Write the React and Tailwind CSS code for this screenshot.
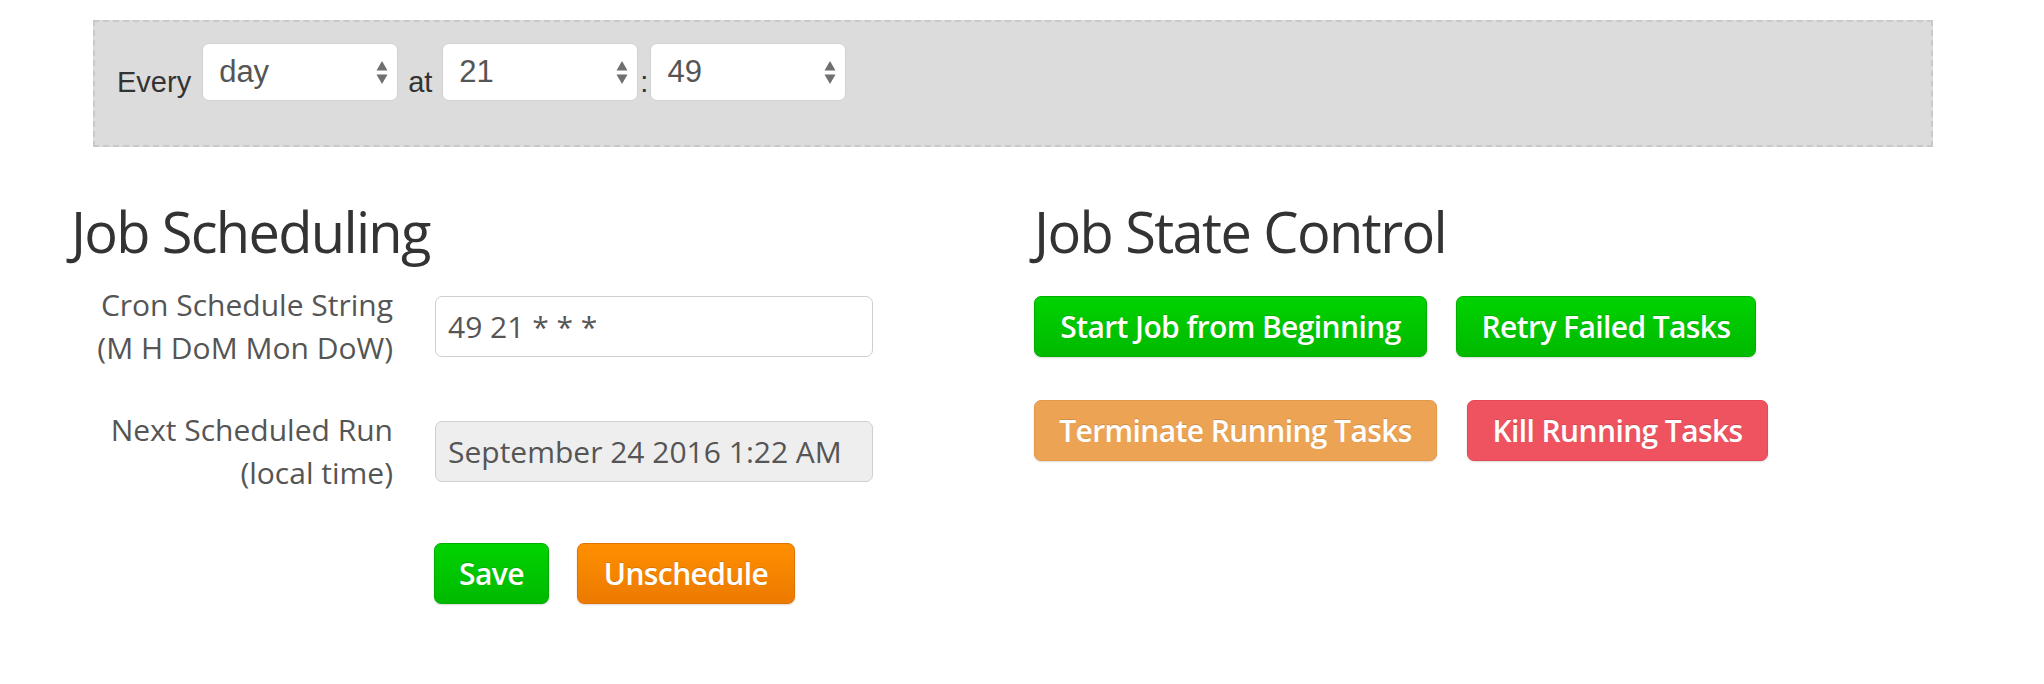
import React from 'react'

const sans = 'font-["Open_Sans",sans-serif]'
const helv = 'font-["Liberation_Sans",Arial,sans-serif]'

function Arrows() {
  return (
    <svg width="12" height="25" viewBox="0 0 12 25" className="shrink-0">
      <path d="M6 1 L11.5 10.5 L0.5 10.5 Z" fill="#707070" />
      <path d="M6 24 L11.5 14.5 L0.5 14.5 Z" fill="#707070" />
    </svg>
  )
}

function Select({ value }) {
  return (
    <div className="w-[196px] h-[58px] bg-white rounded-[7px] border border-[#d2d2d2] flex items-center justify-between pl-[16px] pr-[9px]">
      <span className="text-[31px] leading-[56px] text-[#555] -mt-[1px]">{value}</span>
      <Arrows />
    </div>
  )
}

const green = 'bg-gradient-to-b from-[#00d300] to-[#00b900] border border-[#00ae00]'

function Btn({ children, className }) {
  return (
    <button
      className={`h-[61px] rounded-[7px] px-[23px] text-white text-[30px] font-semibold tracking-[-0.6px] [text-shadow:0_-1px_0_rgba(0,0,0,0.15)] shadow-[0_1px_2px_rgba(0,0,0,0.15)] ${sans} ${className}`}
    >
      {children}
    </button>
  )
}

function FormRow({ lines, value, disabled }) {
  return (
    <div className="flex items-center">
      <div className="w-[326px] text-right text-[30px] leading-[43px] text-[#555]">
        {lines.map((l) => (
          <div key={l}>{l}</div>
        ))}
      </div>
      <div
        className={`ml-[42px] w-[438px] h-[61px] rounded-[7px] border border-[#cfcfcf] flex items-center pl-[12px] text-[30px] text-[#555] ${
          disabled ? 'bg-[#eeeeee]' : 'bg-white'
        }`}
      >
        {value}
      </div>
    </div>
  )
}

export default function App() {
  return (
    <div className="w-[2044px] h-[684px] bg-white pt-[20px] overflow-hidden">
      {/* cron picker */}
      <div className={`ml-[93px] w-[1840px] h-[127px] bg-[#dcdcdc] border-2 border-dashed border-[#c9c9c9] pl-[22px] pt-[21px] ${helv}`}>
        <div className="flex items-end text-[29px] leading-[29px] text-[#333]">
          <span className="mb-[4px] mr-[11px]">Every</span>
          <Select value="day" />
          <span className="mb-[4px] mx-[10px]">at</span>
          <Select value="21" />
          <span className="mb-[4px] mx-[2px]">:</span>
          <Select value="49" />
        </div>
      </div>

      <div className={`flex pl-[67px] mt-[52px] ${sans}`}>
        {/* left */}
        <div className="w-[967px]">
          <h3 className="ml-[4px] text-[56px] leading-[64px] text-[#333] tracking-[-1.7px]">Job Scheduling</h3>
          <div className="mt-[20px]">
            <FormRow lines={['Cron Schedule String', '(M H DoM Mon DoW)']} value="49 21 * * *" />
          </div>
          <div className="mt-[39px]">
            <FormRow lines={['Next Scheduled Run', '(local time)']} value="September 24 2016 1:22 AM" disabled />
          </div>
          <div className="flex gap-[28px] ml-[367px] mt-[49px]">
            <Btn className={`${green} w-[115px] px-0`}>Save</Btn>
            <Btn className="bg-gradient-to-b from-[#ff8f00] to-[#ec7a00] border border-[#e07200] w-[218px]">Unschedule</Btn>
          </div>
        </div>

        {/* right */}
        <div>
          <h3 className="text-[56px] leading-[64px] text-[#333] tracking-[-1.6px]">Job State Control</h3>
          <div className="flex gap-[29px] mt-[33px]">
            <Btn className={`${green} w-[393px]`}>Start Job from Beginning</Btn>
            <Btn className={`${green} w-[300px]`}>Retry Failed Tasks</Btn>
          </div>
          <div className="flex gap-[30px] mt-[43px]">
            <Btn className="bg-[#eca354] border border-[#e59a4a] w-[403px]">Terminate Running Tasks</Btn>
            <Btn className="bg-[#ef535f] border border-[#e44a56] w-[301px]">Kill Running Tasks</Btn>
          </div>
        </div>
      </div>
    </div>
  )
}
